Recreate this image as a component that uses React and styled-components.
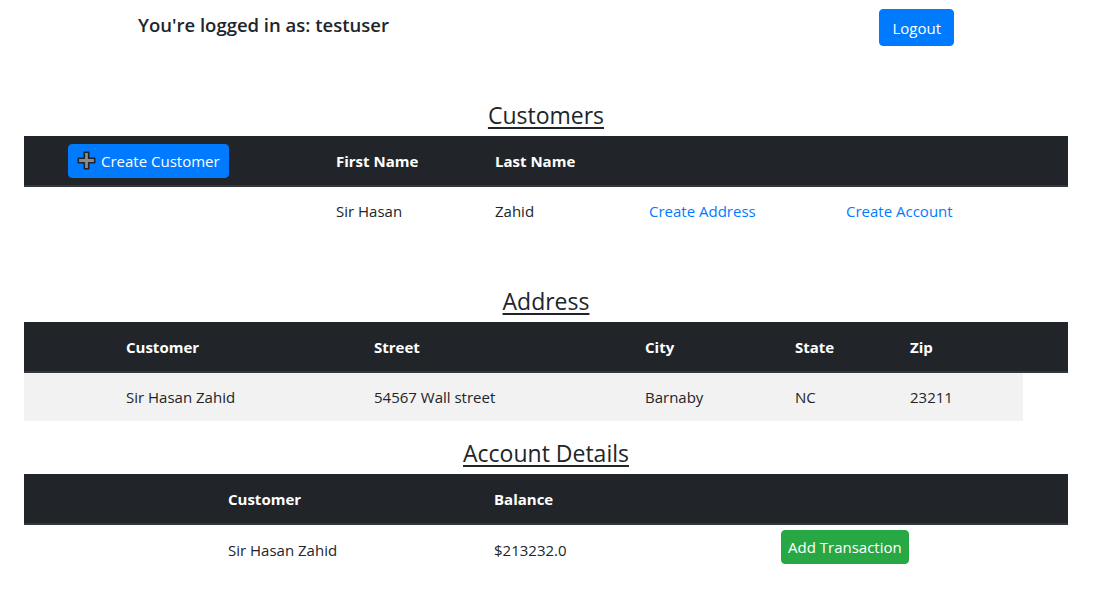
import React from 'react'
import styled, { createGlobalStyle } from 'styled-components'

const GlobalStyle = createGlobalStyle`
  body {
    margin: 0;
    background: #fff;
    color: #212529;
    font-family: "Open Sans", "Noto Sans", sans-serif;
    font-size: 15px;
  }
`

export default function App() {
  return (
    <>
      <GlobalStyle />
      <TopBar>
        <Greeting>You're logged in as: testuser</Greeting>
        <Button>Logout</Button>
      </TopBar>
      <Content>
        <SectionTitle $top="53px">Customers</SectionTitle>
        <Table>
          <colgroup>
            <col width="300" />
            <col width="159" />
            <col width="154" />
            <col width="197" />
            <col width="234" />
          </colgroup>
          <thead>
            <tr>
              <Th $tight>
                <CreateButton>
                  <PlusIcon />
                  Create Customer
                </CreateButton>
              </Th>
              <Th>First Name</Th>
              <Th>Last Name</Th>
              <Th />
              <Th />
            </tr>
          </thead>
          <tbody>
            <tr>
              <Td />
              <Td>Sir Hasan</Td>
              <Td>Zahid</Td>
              <Td><Link href="#">Create Address</Link></Td>
              <Td><Link href="#">Create Account</Link></Td>
            </tr>
          </tbody>
        </Table>

        <SectionTitle $top="50px">Address</SectionTitle>
        <Table>
          <colgroup>
            <col width="90" />
            <col width="248" />
            <col width="271" />
            <col width="150" />
            <col width="115" />
            <col width="125" />
            <col width="45" />
          </colgroup>
          <thead>
            <tr>
              <Th />
              <Th>Customer</Th>
              <Th>Street</Th>
              <Th>City</Th>
              <Th>State</Th>
              <Th>Zip</Th>
              <Th />
            </tr>
          </thead>
          <tbody>
            <tr>
              <Td $striped />
              <Td $striped>Sir Hasan Zahid</Td>
              <Td $striped>54567 Wall street</Td>
              <Td $striped>Barnaby</Td>
              <Td $striped>NC</Td>
              <Td $striped>23211</Td>
            </tr>
          </tbody>
        </Table>

        <SectionTitle $top="16px">Account Details</SectionTitle>
        <Table>
          <colgroup>
            <col width="192" />
            <col width="266" />
            <col width="287" />
            <col width="299" />
          </colgroup>
          <thead>
            <tr>
              <Th />
              <Th>Customer</Th>
              <Th>Balance</Th>
              <Th />
            </tr>
          </thead>
          <tbody>
            <tr>
              <Td $tall />
              <Td $tall>Sir Hasan Zahid</Td>
              <Td $tall>$213232.0</Td>
              <Td $tall $tight>
                <GreenButton>Add Transaction</GreenButton>
              </Td>
            </tr>
          </tbody>
        </Table>
      </Content>
    </>
  )
}

function PlusIcon() {
  return (
    <svg width="19" height="19" viewBox="0 0 19 19">
      <path
        d="M7.3 1.3h4.4v6h6v4.4h-6v6H7.3v-6h-6V7.3h6z"
        fill="#8a8a8a"
        stroke="#1f2327"
        strokeWidth="1.6"
        strokeLinejoin="round"
      />
    </svg>
  )
}

const TopBar = styled.div`
  display: flex;
  justify-content: space-between;
  align-items: flex-start;
  padding: 9px 153px 0 138px;
`

const Greeting = styled.h5`
  margin: 5px 0 0;
  font-size: 18.5px;
  font-weight: 600;
  line-height: 1.2;
`

const Button = styled.button`
  background: #007bff;
  color: #fff;
  border: 1px solid #007bff;
  border-radius: 4px;
  font-family: inherit;
  font-size: 15px;
  height: 37px;
  padding: 0 12px;
  cursor: pointer;
`

const CreateButton = styled(Button)`
  display: inline-flex;
  align-items: center;
  gap: 5px;
  height: 34px;
  padding: 0 8px;
  margin-left: 44px;
`

const GreenButton = styled(Button)`
  background: #28a745;
  border-color: #28a745;
  height: 34px;
  padding: 0 6px;
`

const Content = styled.div`
  width: 1044px;
  margin-left: 24px;
  padding-bottom: 30px;
`

const SectionTitle = styled.h4`
  margin: ${p => p.$top} 0 4px;
  text-align: center;
  font-size: 23px;
  font-weight: 500;
  line-height: 33px;
  text-decoration: underline;
  text-decoration-thickness: 2px;
  text-underline-offset: 3px;
`

const Table = styled.table`
  width: 1044px;
  table-layout: fixed;
  border-collapse: collapse;
`

const Th = styled.th`
  box-sizing: border-box;
  background: #212529;
  color: #fff;
  font-weight: 700;
  text-align: left;
  height: 50px;
  padding: ${p => (p.$tight ? '0' : '0 12px')};
  border-bottom: 2px solid #32383e;
  vertical-align: middle;
`

const Td = styled.td`
  box-sizing: border-box;
  height: ${p => (p.$tall ? '50px' : '49px')};
  padding: ${p => (p.$tight ? '5px 12px 0' : '0 12px')};
  vertical-align: ${p => (p.$tight ? 'top' : 'middle')};
  background: ${p => (p.$striped ? '#f2f2f2' : 'transparent')};
`

const Link = styled.a`
  color: #007bff;
  text-decoration: none;
`
